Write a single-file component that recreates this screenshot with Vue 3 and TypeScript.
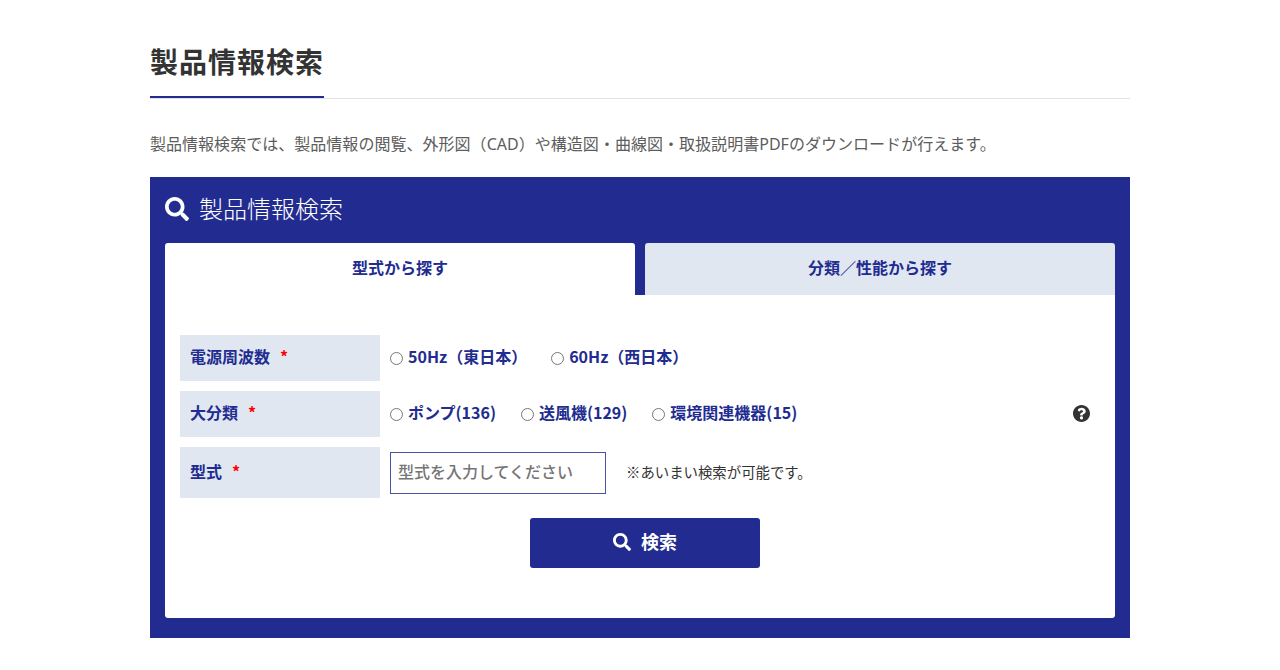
<script setup lang="ts">
const searchPath = 'M505 442.7L405.3 343c-4.5-4.5-10.6-7-17-7H372c27.6-35.3 44-79.7 44-128C416 93.1 322.9 0 208 0S0 93.1 0 208s93.1 208 208 208c48.3 0 92.7-16.4 128-44v16.3c0 6.4 2.5 12.5 7 17l99.7 99.7c9.4 9.4 24.6 9.4 33.9 0l28.3-28.3c9.4-9.4 9.4-24.6.1-34zM208 336c-70.7 0-128-57.2-128-128 0-70.7 57.2-128 128-128 70.7 0 128 57.2 128 128 0 70.7-57.2 128-128 128z'
const powers = ['50Hz（東日本）', '60Hz（西日本）']
const categories = ['ポンプ(136)', '送風機(129)', '環境関連機器(15)']
</script>

<template>
  <main class="page">
    <h1 class="title"><span>製品情報検索</span></h1>
    <p class="lead">製品情報検索では、製品情報の閲覧、外形図（CAD）や構造図・曲線図・取扱説明書PDFのダウンロードが行えます。</p>
    <section class="panel">
      <h2 class="panel-title">
        <svg class="panel-icon" viewBox="0 0 512 512"><path :d="searchPath" /></svg>
        <span>製品情報検索</span>
      </h2>
      <div class="tabs">
        <div class="tab active">型式から探す</div>
        <div class="tab">分類／性能から探す</div>
      </div>
      <div class="body">
        <div class="row">
          <div class="label">電源周波数<i>*</i></div>
          <div class="field radios wide">
            <label v-for="p in powers" :key="p"><input type="radio" name="power" /><b>{{ p }}</b></label>
          </div>
        </div>
        <div class="row">
          <div class="label">大分類<i>*</i></div>
          <div class="field radios">
            <label v-for="c in categories" :key="c"><input type="radio" name="cat" /><b>{{ c }}</b></label>
            <svg class="help" viewBox="8 8 496 496"><path fill="#333" d="M504 256c0 136.997-111.043 248-248 248S8 392.997 8 256C8 119.083 119.043 8 256 8s248 111.083 248 248zM262.655 90c-54.497 0-89.255 22.957-116.549 63.758-3.536 5.286-2.353 12.415 2.715 16.258l34.699 26.31c5.205 3.947 12.621 3.008 16.665-2.122 17.864-22.658 30.113-35.797 57.303-35.797 20.429 0 45.698 13.148 45.698 32.958 0 14.976-12.363 22.667-32.534 33.976C247.128 238.528 216 254.941 216 296v4c0 6.627 5.373 12 12 12h56c6.627 0 12-5.373 12-12v-1.333c0-28.462 83.186-29.647 83.186-106.667 0-58.002-60.165-102-116.531-102zM256 338c-25.365 0-46 20.635-46 46 0 25.364 20.635 46 46 46s46-20.636 46-46c0-25.365-20.635-46-46-46z" /></svg>
          </div>
        </div>
        <div class="row tall">
          <div class="label">型式<i>*</i></div>
          <div class="field">
            <input class="text" type="text" placeholder="型式を入力してください" />
            <span class="note">※あいまい検索が可能です。</span>
          </div>
        </div>
        <button class="submit" type="button">
          <svg class="submit-icon" viewBox="0 0 512 512"><path :d="searchPath" /></svg>
          <span class="submit-text">検索</span>
        </button>
      </div>
    </section>
  </main>
</template>

<style>
html, body { margin: 0; background: #fff; }
</style>

<style scoped>
.page {
  width: 980px;
  margin: 0 auto;
  padding-top: 40px;
  font-family: "Noto Sans CJK JP", "Noto Sans", sans-serif;
  color: #333;
}
.title {
  margin: 0;
  height: 59px;
  border-bottom: 1px solid #e3e3e3;
  box-sizing: border-box;
  font-size: 28px;
  line-height: 43px;
  font-weight: 700;
  letter-spacing: 1px;
}
.title span {
  display: inline-block;
  height: 58px;
  width: 174px;
  box-sizing: border-box;
  border-bottom: 2px solid #222c90;
}
.lead {
  margin: 33px 0 0;
  font-family: "Noto Sans", "Noto Sans CJK JP", sans-serif;
  font-size: 16px;
  line-height: 24px;
  letter-spacing: 0.03px;
  color: #5c5c5c;
  white-space: nowrap;
}
.panel {
  margin-top: 21px;
  background: #222c90;
  padding: 15px 15px 20px;
}
.panel-title {
  margin: 0;
  height: 51px;
  display: flex;
  align-items: flex-start;
  gap: 10px;
  font-size: 24px;
  line-height: 32px;
  font-weight: 300;
  color: #fff;
}
.panel-icon {
  width: 24px;
  height: 24px;
  margin-top: 5px;
  fill: #fff;
}
.tabs {
  display: flex;
  gap: 10px;
}
.tab {
  flex: 1;
  height: 52px;
  line-height: 48px;
  text-align: center;
  background: #e1e7f0;
  border-radius: 3px 3px 0 0;
  color: #222c90;
  font-size: 16px;
  font-weight: 700;
}
.tab.active {
  background: #fff;
}
.body {
  background: #fff;
  border-radius: 0 0 3px 3px;
  padding: 40px 15px 50px;
  height: 323px;
  box-sizing: border-box;
}
.row {
  display: flex;
  margin-bottom: 10px;
  height: 46px;
}
.row.tall {
  height: 51px;
  margin-bottom: 20px;
}
.label {
  width: 200px;
  box-sizing: border-box;
  padding: 0 0 4px 10px;
  display: flex;
  align-items: center;
  background: #e1e7f0;
  color: #222c90;
  font-size: 16px;
  font-weight: 700;
}
.label i {
  margin-left: 10px;
  color: #f00;
  font-style: normal;
}
.field {
  flex: 1;
  padding: 0 10px;
  display: flex;
  align-items: center;
}
.radios {
  gap: 25px;
  padding-bottom: 4px;
}
.radios.wide {
  gap: 24px;
}
.radios label {
  display: flex;
  align-items: center;
  gap: 5px;
}
.radios input {
  margin: 4px 0 0;
  width: 13px;
  height: 13px;
}
.radios b {
  color: #222c90;
  font-size: 16px;
  font-weight: 700;
}
.help {
  width: 17px;
  height: 17px;
  margin: 2px 0 0 auto;
}
.text {
  width: 216px;
  height: 42px;
  box-sizing: border-box;
  border: 1px solid #4a53a8;
  border-radius: 0;
  padding: 0 7px 4px;
  font: 500 16px "Noto Sans CJK JP", sans-serif;
  color: #333;
  outline: none;
}
.text::placeholder {
  color: #757575;
  opacity: 1;
}
.note {
  margin-left: 20px;
  padding-bottom: 3px;
  font-size: 14.4px;
  color: #333;
}
.submit {
  display: flex;
  align-items: center;
  justify-content: center;
  gap: 10px;
  width: 230px;
  height: 50px;
  margin: 0 0 0 350px;
  padding: 0 0 2px;
  border: 0;
  border-radius: 3px;
  background: #222c90;
  color: #fff;
  font: 700 18px "Noto Sans CJK JP", sans-serif;
}
.submit-text {
  margin-bottom: 2px;
}
.submit-icon {
  width: 18px;
  height: 18px;
  fill: #fff;
}
</style>
